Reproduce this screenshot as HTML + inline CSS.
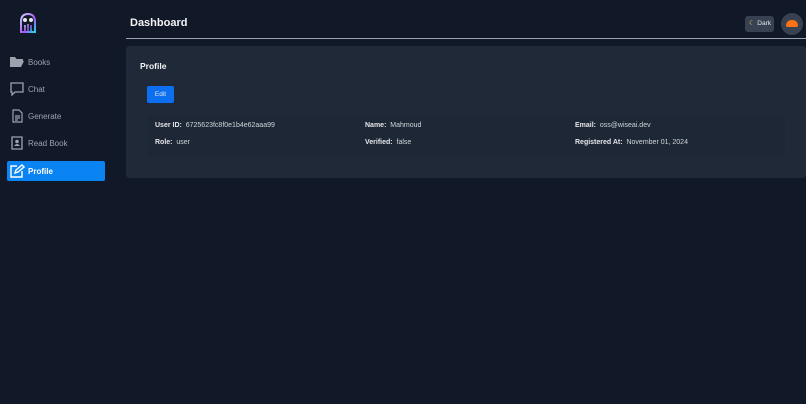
<!DOCTYPE html>
<html><head><style>
body{margin:0;width:806px;height:404px;background:#111827;font-family:"Liberation Sans",sans-serif;color:#d1d5db;position:relative;overflow:hidden}
.a{position:absolute}
.nav{position:absolute;left:7px;width:98px;height:20px;font-size:8px;color:#9ca3af;display:flex;align-items:center;border-radius:2px}
.nav svg{margin-left:2px;margin-right:3px}
.lbl{font-weight:bold;color:#e5e7eb}
.f{position:absolute;font-size:7px;color:#d1d5db}
</style></head><body>
<svg class="a" style="left:18px;top:12px" width="20" height="22" viewBox="0 0 20 22">
<defs><linearGradient id="g" x1="0" y1="0" x2="1" y2="1"><stop offset="0" stop-color="#c7d2fe"/><stop offset=".6" stop-color="#a855f7"/><stop offset="1" stop-color="#22d3ee"/></linearGradient></defs>
<path d="M3 10 Q3 2 10 2 Q17 2 17 10 L17 20 L3 20Z" fill="none" stroke="url(#g)" stroke-width="2"/>
<circle cx="7" cy="8" r="2" fill="#e5e7eb"/><circle cx="13" cy="8" r="2" fill="#e5e7eb"/>
<path d="M7 19V13M10 19V12M13 19V13" stroke="url(#g)" stroke-width="1.5"/>
</svg>
<div class="nav" style="top:52px"><svg width="16" height="14" viewBox="0 0 16 14"><path d="M1 2h5l1.5 2H14v2H4L1 12Z M1 12l3-6h11l-3 6Z" fill="#9ca3af"/></svg>Books</div>
<div class="nav" style="top:79px"><svg width="16" height="14" viewBox="0 0 16 14"><path d="M2 1h12v9H6l-3 3v-3H2Z" fill="none" stroke="#9ca3af" stroke-width="1.3"/></svg>Chat</div>
<div class="nav" style="top:106px"><svg width="16" height="14" viewBox="0 0 16 14"><path d="M4 1h6l3 3v9H4Z M6 7h5M6 9h5M6 11h3" fill="none" stroke="#9ca3af" stroke-width="1.2"/></svg>Generate</div>
<div class="nav" style="top:133px"><svg width="16" height="14" viewBox="0 0 16 14"><path d="M3 1h10v12H3Z" fill="none" stroke="#9ca3af" stroke-width="1.3"/><circle cx="8" cy="5.5" r="1.8" fill="#9ca3af"/><path d="M5 10q3-4 6 0" fill="#9ca3af"/></svg>Read Book</div>
<div class="nav" style="top:161px;background:#0b84f3;color:#fff;font-weight:bold"><svg width="16" height="14" viewBox="0 0 16 14"><path d="M8 2H2v11h11V7 M6 9l1-3 6-5 2 2-6 5Z" fill="none" stroke="#fff" stroke-width="1.4"/></svg>Profile</div>
<div class="a" style="left:130px;top:17px;font-size:11px;font-weight:bold;color:#f3f4f6">Dashboard</div>
<div class="a" style="left:126px;top:38px;width:680px;height:1px;background:#9ca3af"></div>
<div class="a" style="left:745px;top:16px;width:29px;height:16px;background:#374151;border-radius:3px;font-size:6.5px;color:#e5e7eb;line-height:16px;text-align:right;box-sizing:border-box;padding-right:3px"><span style="color:#fcd34d;position:absolute;left:4px">☾</span>Dark</div>
<div class="a" style="left:781px;top:13px;width:22px;height:22px;border-radius:50%;background:#374151"></div>
<div class="a" style="left:786px;top:20px;width:12px;height:7px;border-radius:6px 6px 2px 2px;background:#f97316"></div>
<div class="a" style="left:126px;top:46px;width:680px;height:132px;background:#1f2937;border-radius:3px"></div>
<div class="a" style="left:140px;top:61px;font-size:8.5px;font-weight:bold;color:#f3f4f6">Profile</div>
<div class="a" style="left:147px;top:86px;width:27px;height:17px;background:#0b6ff0;border-radius:2px;color:#e5e7eb;font-size:6.5px;text-align:center;line-height:17px">Edit</div>
<div class="a" style="left:148px;top:115px;width:637px;height:42px;background:#1e2735;border-radius:3px"></div>
<div class="f" style="left:155px;top:122px"><span class="lbl">User ID:</span>&nbsp; 6725623fc8f0e1b4e62aaa99</div>
<div class="f" style="left:155px;top:139px"><span class="lbl">Role:</span>&nbsp; user</div>
<div class="f" style="left:365px;top:122px"><span class="lbl">Name:</span>&nbsp; Mahmoud</div>
<div class="f" style="left:365px;top:139px"><span class="lbl">Verified:</span>&nbsp; false</div>
<div class="f" style="left:575px;top:122px"><span class="lbl">Email:</span>&nbsp; oss@wiseai.dev</div>
<div class="f" style="left:575px;top:139px"><span class="lbl">Registered At:</span>&nbsp; November 01, 2024</div>
</body></html>
